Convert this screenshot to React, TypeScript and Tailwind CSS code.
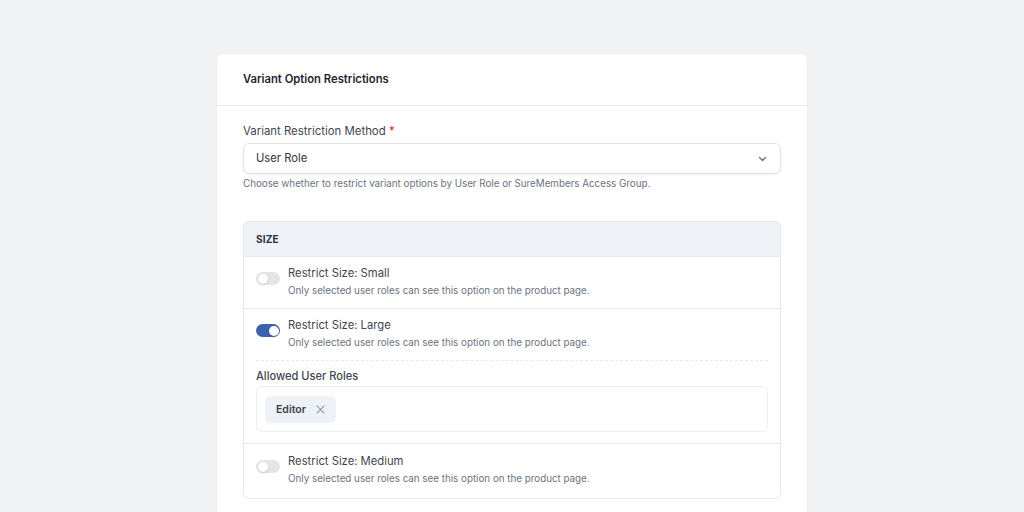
import React from 'react';

const Toggle = ({ on }: { on: boolean }) => (
  <span
    className={`relative inline-flex h-[13px] w-6 shrink-0 rounded-full ${on ? 'bg-[#3c63ae]' : 'bg-[#e3e5e9]'}`}
  >
    <span
      className={`absolute top-[1.5px] h-[10px] w-[10px] rounded-full bg-white shadow-sm ${on ? 'left-[12.5px]' : 'left-[1.5px]'}`}
    />
  </span>
);

const OptionRow = ({
  label,
  on,
  last,
  children,
}: {
  label: string;
  on: boolean;
  last?: boolean;
  children?: React.ReactNode;
}) => (
  <div className={`border-t border-[#e6e8ec] px-3 ${last ? 'pt-[9px] pb-[11px]' : 'pt-2 pb-[9px]'}`}>
    <div className="flex gap-2">
      <div className="pt-[2px]">
        <Toggle on={on} />
      </div>
      <div>
        <div className="text-[11.25px] leading-4 text-[#3f4550]">{label}</div>
        <div className="mt-0.5 text-[9.8px] leading-4 text-[#6b7280]">
          Only selected user roles can see this option on the product page.
        </div>
      </div>
    </div>
    {children}
  </div>
);

const App = () => {
  return (
    <div className="min-h-[512px] bg-[#f1f2f4] pt-[54px] font-['Inter',sans-serif]">
      <div className="mx-auto w-[590px] rounded-t-md bg-white pb-6 shadow-[0_0_0_1px_rgba(0,0,0,0.02)]">
        <div className="flex h-[52px] items-center border-b border-[#e6e8ec] px-[26px]">
          <h2 className="text-[11.25px] font-semibold text-[#1f2430]">Variant Option Restrictions</h2>
        </div>

        <div className="px-[26px] pt-[15px]">
          <label className="block text-[11.4px] leading-5 text-[#3f4550]">
            Variant Restriction Method <span className="text-[#dc2626]">*</span>
          </label>
          <div className="mt-0.5 flex h-[31px] items-center justify-between rounded-md border border-[#e3e5e9] bg-white pl-3 pr-[13px] shadow-[0_1px_2px_rgba(0,0,0,0.06)]">
            <span className="text-[11.25px] text-[#2f3440]">User Role</span>
            <svg width="9" height="6" viewBox="0 0 9 6" fill="none">
              <path d="M1.5 1.5 4.5 4.5 7.5 1.5" stroke="#6b7280" strokeWidth="1.4" strokeLinecap="round" strokeLinejoin="round" />
            </svg>
          </div>
          <p className="mt-0.5 text-[9.8px] leading-4 text-[#6b7280]">
            Choose whether to restrict variant options by User Role or SureMembers Access Group.
          </p>

          <div className="mt-[29px] overflow-hidden rounded-md border border-[#e3e6ec]">
            <div className="flex h-[34px] items-center bg-[#eff2f7] px-3">
              <span className="text-[10px] font-bold tracking-[0.02em] text-[#2a2f3a]">SIZE</span>
            </div>

            <OptionRow label="Restrict Size: Small" on={false} />
            <OptionRow label="Restrict Size: Large" on={true}>
              <div className="mt-[9px] border-t border-dashed border-[#e6e8ec]" />
              <div className="mt-[7px] text-[11.1px] font-medium leading-4 text-[#3f4550]">Allowed User Roles</div>
              <div className="mt-[2px] rounded-md border border-[#eceef2] p-2">
                <span className="inline-flex h-[27px] items-center gap-[10px] rounded-md bg-[#eef1f6] pl-[11px] pr-[11px]">
                  <span className="text-[10.5px] font-semibold text-[#3a3f4a]">Editor</span>
                  <svg width="9" height="9" viewBox="0 0 9 9" fill="none">
                    <path d="M1 1 8 8M8 1 1 8" stroke="#9aa0aa" strokeWidth="1.1" strokeLinecap="round" />
                  </svg>
                </span>
              </div>
              <div className="h-[2px]" />
            </OptionRow>
            <OptionRow label="Restrict Size: Medium" on={false} last />
          </div>
        </div>
      </div>
    </div>
  );
};

export default App;
